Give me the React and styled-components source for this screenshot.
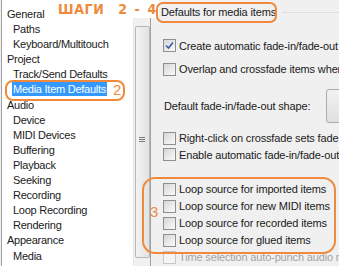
import styled, { createGlobalStyle } from "styled-components";

const GlobalStyle = createGlobalStyle`
  html, body {
    margin: 0;
    padding: 0;
    background: #f0f0f0;
  }
  body {
    font-family: "Liberation Sans", Arial, sans-serif;
    font-size: 11px;
    color: #1a1a1a;
  }
`;

const orange = "#ef8a3c";

const Screen = styled.div`
  position: relative;
  width: 339px;
  height: 266px;
  overflow: hidden;
  display: flex;
  background: #f0f0f0;
`;

const TreePane = styled.div`
  flex: none;
  display: flex;
  width: 148px;
  height: 100%;
  border-left: 1px solid #a0a0a0;
  border-right: 1px solid #a0a0a0;
  margin-left: 1px;
  background: #fff;
`;

const TreeList = styled.ul`
  list-style: none;
  margin: 0;
  padding: 7px 0 0 0;
  flex: 1;
`;

const TreeItem = styled.li`
  height: 15.1px;
  line-height: 15px;
  padding-left: ${(p) => (p.$child ? 11 : 5)}px;
  white-space: nowrap;
  font-size: 11px;
  letter-spacing: -0.25px;
`;

const Selected = styled.span`
  background: #3399ff;
  color: #fff;
  padding: 1px 1px;
  margin-left: -1px;
`;

const ScrollBar = styled.div`
  width: 16px;
  display: flex;
  flex-direction: column;
  align-items: center;
  background: #f0f0f0;
  border-left: 1px solid #e6e6e6;
`;

const Arrow = styled.div`
  height: 26px;
  display: flex;
  align-items: center;
  justify-content: center;
`;

const Thumb = styled.div`
  width: 13px;
  flex: 1;
  margin-bottom: 8px;
  border: 1px solid #b8b8b8;
  border-radius: 2px;
  background: linear-gradient(to right, #f3f3f3, #e2e2e2);
  display: flex;
  align-items: center;
  justify-content: center;
`;

const Grip = styled.div`
  width: 6px;
  height: 6px;
  margin-top: -4px;
  background: repeating-linear-gradient(
    to bottom,
    #7a7a7a 0 1px,
    transparent 1px 2px
  );
`;

const Settings = styled.div`
  flex: 1;
  min-width: 0;
  overflow: hidden;
  padding: 6px 0 0 12px;
  display: flex;
  flex-direction: column;
  letter-spacing: -0.15px;
`;

const GroupTitle = styled.div`
  display: flex;
  align-items: center;
  gap: 6px;
  height: 13px;
  margin-left: -2px;
  white-space: nowrap;
  &::after {
    content: "";
    flex: 1;
    height: 1px;
    background: #d5dfe5;
  }
`;

const CheckRow = styled.label`
  display: flex;
  align-items: center;
  gap: 3px;
  height: ${(p) => p.$h || 17}px;
  margin-top: ${(p) => p.$mt || 0}px;
  white-space: nowrap;
  color: ${(p) => (p.$disabled ? "#a3a3a3" : "#1a1a1a")};
`;

const Box = styled.span`
  width: 11px;
  height: 11px;
  flex: none;
  border: 1px solid ${(p) => (p.$disabled ? "#c8c8c8" : "#8e8f8f")};
  background: ${(p) =>
    p.$disabled
      ? "#f4f4f4"
      : "linear-gradient(135deg, #d6d6d6 0%, #ececec 60%, #fafafa 100%)"};
  display: flex;
  align-items: center;
  justify-content: center;
`;

const ShapeRow = styled.div`
  display: flex;
  align-items: center;
  justify-content: space-between;
  height: 34px;
  margin-top: 11px;
  margin-left: 1px;
  white-space: nowrap;
`;

const ShapeButton = styled.div`
  flex: none;
  width: 40px;
  height: 32px;
  margin-right: -29px;
  border: 1px solid #acacac;
  border-radius: 3px;
  background: linear-gradient(to bottom, #f2f2f2, #e0e0e0);
`;

const Steps = styled.div`
  position: absolute;
  left: 56px;
  top: 0;
  padding: 1px 2px;
  background: #fff;
  color: ${orange};
  font-family: "DejaVu Sans Condensed", "DejaVu Sans", sans-serif;
  font-stretch: condensed;
  font-weight: bold;
  font-size: 14px;
  letter-spacing: 0.6px;
  word-spacing: 2px;
  white-space: pre;
`;

const Callout = styled.div`
  position: absolute;
  left: ${(p) => p.$x}px;
  top: ${(p) => p.$y}px;
  width: ${(p) => p.$w}px;
  height: ${(p) => p.$h}px;
  border: 2px solid ${orange};
  border-radius: ${(p) => p.$r || 8}px;
  box-sizing: border-box;
  pointer-events: none;
`;

const Mark = styled.span`
  position: absolute;
  left: ${(p) => p.$x}px;
  top: ${(p) => p.$y}px;
  color: ${orange};
  font-size: 15px;
  font-family: "Liberation Sans", Arial, sans-serif;
`;

const tree = [
  ["General", false],
  ["Paths", true],
  ["Keyboard/Multitouch", true],
  ["Project", false],
  ["Track/Send Defaults", true],
  ["Media Item Defaults", true, true],
  ["Audio", false],
  ["Device", true],
  ["MIDI Devices", true],
  ["Buffering", true],
  ["Playback", true],
  ["Seeking", true],
  ["Recording", true],
  ["Loop Recording", true],
  ["Rendering", true],
  ["Appearance", false],
  ["Media", true],
];

const Check = () => (
  <svg width="9" height="9" viewBox="0 0 9 9">
    <path d="M1 4.5 L3.5 7 L8 1.5" fill="none" stroke="#3c5aa8" strokeWidth="1.6" />
  </svg>
);

const App = () => {
  return (
    <Screen>
      <GlobalStyle />
      <TreePane>
        <TreeList>
          {tree.map(([name, child, sel]) => (
            <TreeItem key={name} $child={child}>
              {sel ? <Selected>{name}</Selected> : name}
            </TreeItem>
          ))}
        </TreeList>
        <ScrollBar>
          <Arrow>
            <svg width="7" height="4" viewBox="0 0 7 4">
              <path d="M0 4 L3.5 0 L7 4 Z" fill="#4d4d4d" />
            </svg>
          </Arrow>
          <Thumb>
            <Grip />
          </Thumb>
        </ScrollBar>
      </TreePane>
      <Settings>
        <GroupTitle>Defaults for media items</GroupTitle>
        <CheckRow $mt={19} $h={17}>
          <Box><Check /></Box>
          Create automatic fade-in/fade-out for new items
        </CheckRow>
        <CheckRow $mt={7} $h={17}>
          <Box />
          Overlap and crossfade items when splitting
        </CheckRow>
        <ShapeRow>
          Default fade-in/fade-out shape:
          <ShapeButton />
        </ShapeRow>
        <CheckRow $mt={7} $h={17}>
          <Box />
          Right-click on crossfade sets fade shape
        </CheckRow>
        <CheckRow $h={17}>
          <Box />
          Enable automatic fade-in/fade-out on items
        </CheckRow>
        <CheckRow $mt={18} $h={17.4}>
          <Box />
          Loop source for imported items
        </CheckRow>
        <CheckRow $h={17.4}>
          <Box />
          Loop source for new MIDI items
        </CheckRow>
        <CheckRow $h={17.4}>
          <Box />
          Loop source for recorded items
        </CheckRow>
        <CheckRow $h={17.4}>
          <Box />
          Loop source for glued items
        </CheckRow>
        <CheckRow $h={18} $disabled>
          <Box $disabled />
          Time selection auto-punch audio recorded items
        </CheckRow>
      </Settings>

      <Steps>ШАГИ  2 - 4</Steps>
      <Callout $x={5} $y={80} $w={120} $h={21} $r={8} />
      <Mark $x={113} $y={81}>2</Mark>
      <Callout $x={156} $y={2} $w={121} $h={21} $r={7} />
      <Callout $x={142} $y={177} $w={194} $h={77} $r={13} />
      <Mark $x={150} $y={203}>3</Mark>
    </Screen>
  );
};

export default App;
